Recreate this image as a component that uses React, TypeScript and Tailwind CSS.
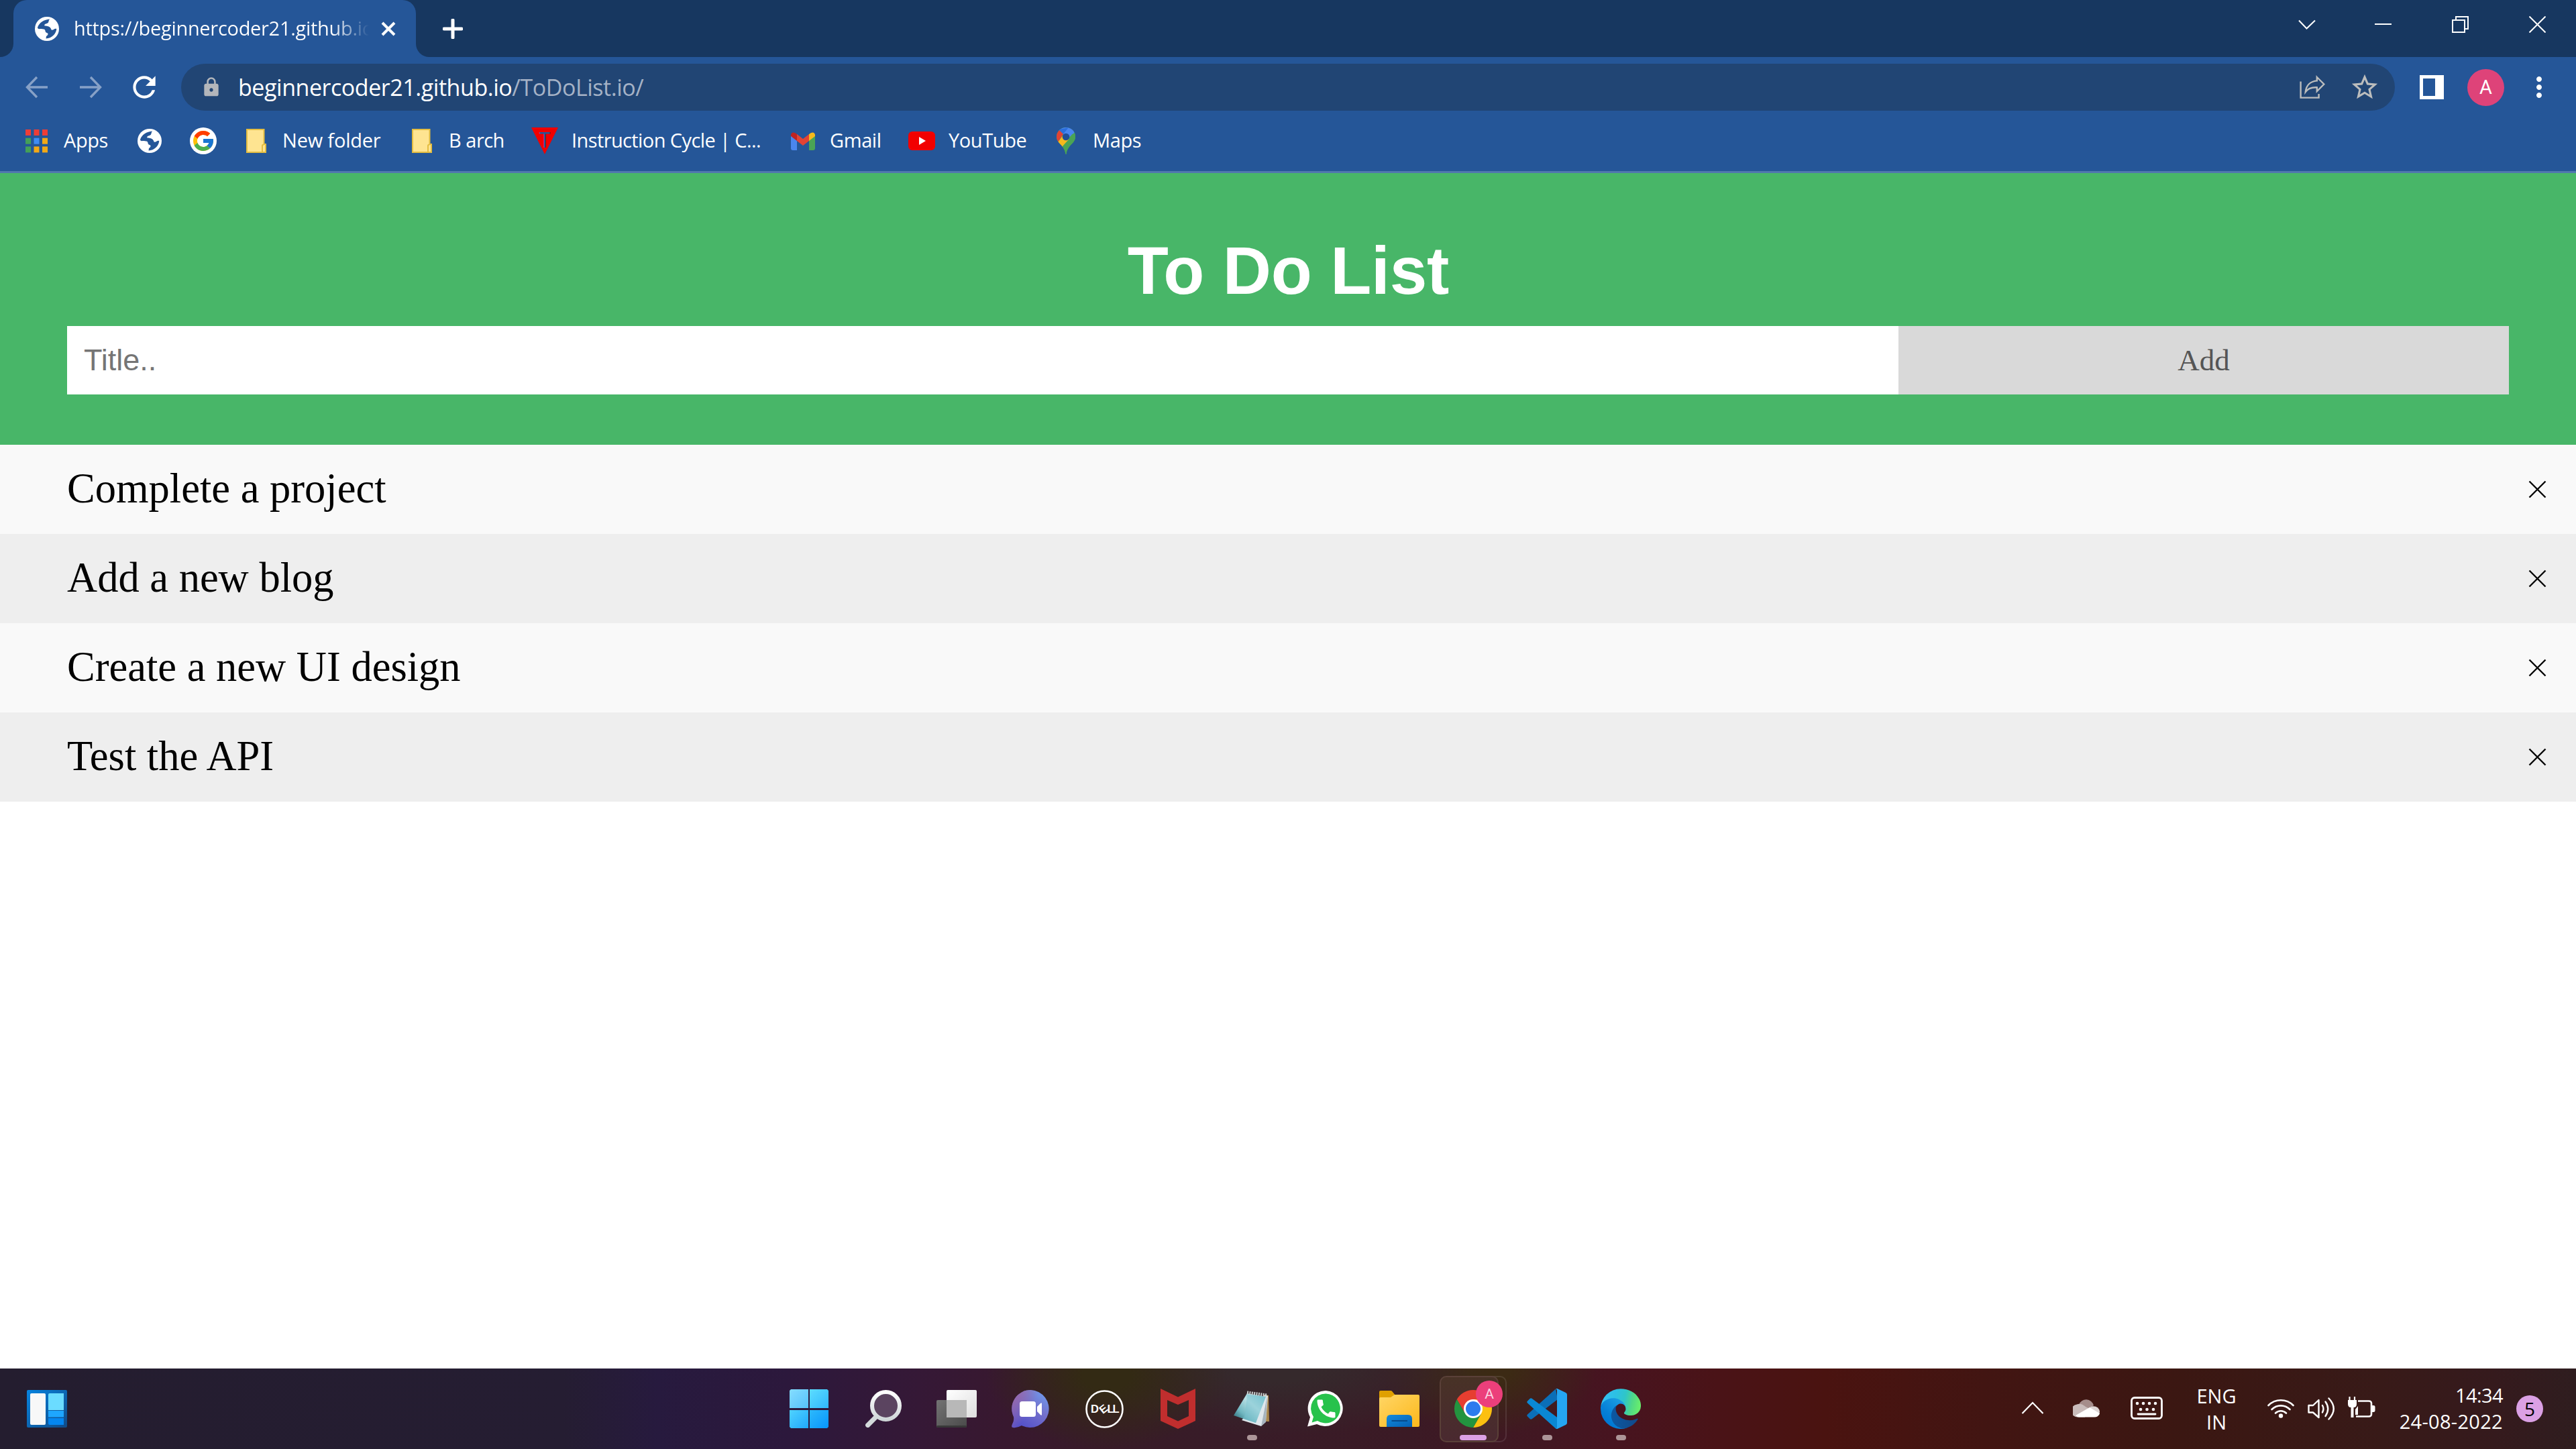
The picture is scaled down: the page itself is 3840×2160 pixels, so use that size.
import React from "react";
import { MdLock, MdStarBorder, MdRefresh, MdMoreVert, MdCall } from "react-icons/md";
import { FcGoogle } from "react-icons/fc";

const todos = ["Complete a project", "Add a new blog", "Create a new UI design", "Test the API"];

function Globe() {
  return (
    <svg className="h-9 w-9 shrink-0" viewBox="0 0 36 36">
      <circle cx="18" cy="18" r="18" fill="#fff" />
      <path
        d="M22 3.500 C14 4 6 9 4 16 C4 19 8 18 13 18.500 C17 19 14 23 18 24 C21 25 19 28 17 29 L16.500 32.500 C25 32 31.500 26 32.300 18 C29 16.500 28 20.500 24.500 19.500 C24 15.500 20 13.500 14.500 13.500 C13.500 10.500 17 10.500 19 9.500 C21 8.500 20 6 22 3.500 Z"
        fill="#255698"
      />
    </svg>
  );
}

function Tab() {
  return (
    <div className="flex h-[85px] w-full bg-[#173760]">
      <svg className="h-[85px] w-5 shrink-0" viewBox="0 0 20 85">
        <path d="M20 65 A20 20 0 0 1 0 85 H20 Z" fill="#255698" />
      </svg>
      <div className="flex h-[85px] w-[600px] shrink-0 items-center rounded-t-[20px] bg-[#255698] pl-8 text-white">
        <Globe />
        <div className="ml-[22px] h-[48px] w-[440px] whitespace-nowrap bg-[linear-gradient(90deg,#fff_385px,transparent_440px)] bg-clip-text text-[29px] leading-[46px] tracking-[-0.3px] text-transparent">
          https://beginnercoder21.github.io
        </div>
        <svg className="ml-[18px] h-[22px] w-[22px]" viewBox="0 0 22 22">
          <path d="M2 2 L20 20 M20 2 L2 20" stroke="#fff" strokeWidth="4" />
        </svg>
      </div>
      <svg className="h-[85px] w-5 shrink-0" viewBox="0 0 20 85">
        <path d="M0 65 A20 20 0 0 0 20 85 H0 Z" fill="#255698" />
      </svg>
      <svg className="ml-5 mt-7 h-[30px] w-[30px]" viewBox="0 0 30 30">
        <path d="M15 2 V28 M2 15 H28" stroke="#fff" strokeWidth="5" strokeLinecap="round" />
      </svg>
      <svg className="ml-auto mt-[29px] h-[15px] w-[26px]" viewBox="0 0 26 15">
        <path d="M1 1.5 L12.500 13.5 L25 1.5" fill="none" stroke="#fff" strokeWidth="2" />
      </svg>
      <div className="ml-[88px] mt-[35px] h-[2px] w-[25px] bg-white" />
      <svg className="ml-[90px] mt-6 h-[25px] w-[25px]" viewBox="0 0 25 25">
        <path d="M1 6 H19 V24 H1 Z M6 6 V1 H24 V19 H19" fill="none" stroke="#fff" strokeWidth="2" />
      </svg>
      <svg className="ml-[90px] mr-[45px] mt-6 h-[25px] w-[25px]" viewBox="0 0 25 25">
        <path d="M.5 .5 L24.5 24.5 M24.5 .5 L.5 24.5" stroke="#fff" strokeWidth="2" />
      </svg>
    </div>
  );
}

function Toolbar() {
  return (
    <div className="flex h-[90px] items-center bg-[#255698] pl-[38px] text-white">
      <svg className="h-[34px] w-[34px]" viewBox="0 0 34 34">
        <path d="M33 17 H3 M17 2 L2.5 17 L17 32" fill="none" stroke="#87a1c7" strokeWidth="3.4" />
      </svg>
      <svg className="ml-[46px] h-[34px] w-[34px]" viewBox="0 0 34 34">
        <path d="M1 17 H31 M17 2 L31.5 17 L17 32" fill="none" stroke="#87a1c7" strokeWidth="3.4" />
      </svg>
      <MdRefresh className="ml-[38px] h-[50px] w-[50px]" />
      <div className="ml-[30px] flex h-[70px] w-[3300px] items-center rounded-full bg-[#214574] pl-[29px] pr-[22px]">
        <MdLock className="h-8 w-8 text-[#b3b6bb]" />
        <span className="ml-[24px] whitespace-nowrap text-[34px] leading-[46px] tracking-[-0.45px]">
          beginnercoder21.github.io<span className="text-[#a5b2c6]">/ToDoList.io/</span>
        </span>
        <svg className="ml-auto h-[36px] w-[38px]" viewBox="0 0 38 36">
          <g fill="none" stroke="#bcbdbd" strokeWidth="2.4">
            <path d="M1.6 9.5 V33.6 H28.6 V28" />
            <path d="M25.8 3 L36.3 13.5 L25.8 24 V18.3 C18.5 17.8 12.5 20 8.8 25 C9.8 15.5 16 9.2 25.8 8.4 Z" />
          </g>
        </svg>
        <MdStarBorder className="ml-[36px] h-[46px] w-[46px] text-[#bcbdbd]" />
      </div>
      <svg className="ml-[37px] h-9 w-9" viewBox="0 0 36 36">
        <path d="M0 0 H36 V36 H0 Z M5 5 V31 H23 V5 Z" fill="#fff" fillRule="evenodd" />
      </svg>
      <div className="ml-[35px] flex h-[55px] w-[55px] items-center justify-center rounded-full bg-[#de4379] font-['Roboto'] text-[29px] leading-none">
        A
      </div>
      <MdMoreVert className="ml-[28px] h-12 w-12" />
    </div>
  );
}

function AppsIcon() {
  const c = ["#ee3d37", "#ee3d37", "#ee3d37", "#44a058", "#3f8cf4", "#f2a817", "#44a058", "#f2a817", "#f2a817"];
  return (
    <svg className="h-[35px] w-[35px] shrink-0" viewBox="0 0 35 35">
      {c.map((f, i) => (
        <rect key={i} x={1 + (i % 3) * 12.5} y={Math.floor(i / 3) * 12.7} width="8" height="9" fill={f} />
      ))}
    </svg>
  );
}

function BookmarkFolder() {
  return (
    <svg className="h-9 w-[30px] shrink-0" viewBox="0 0 30 36">
      <path d="M1 1 H26.500 V23 H29 V35 H1 Z" fill="#fee491" stroke="#e4bd41" strokeWidth="2" />
      <path d="M24 34 V25 Q24 23.500 26.500 23.500" fill="none" stroke="#e4bd41" strokeWidth="2" />
    </svg>
  );
}

function Bookmarks() {
  return (
    <div className="flex h-[83px] items-start border-b-[3px] border-[#5078ae] bg-[#255698] pl-[37px] text-[29px] text-white">
      <div className="flex h-[70px] items-center whitespace-nowrap leading-[44px]">
        <AppsIcon />
        <span className="ml-[23px] w-[110px] pb-[2px] tracking-[-0.4px]">Apps</span>
        <Globe />
        <div className="ml-[42px] flex h-10 w-10 items-center justify-center rounded-full bg-white">
          <FcGoogle className="h-9 w-9" />
        </div>
        <span className="ml-[44px]" />
        <BookmarkFolder />
        <span className="ml-[24px] w-[193px] pb-[2px] tracking-[-0.2px]">New folder</span>
        <BookmarkFolder />
        <span className="ml-[25px] w-[123px] pb-[2px] tracking-[-0.5px]">B arch</span>
        <svg className="h-10 w-10" viewBox="0 0 40 40">
          <path d="M0 0 H40 L20 40 Z" fill="#f00000" />
          <text x="0" y="0" transform="translate(20 30) scale(.85 1)" textAnchor="middle" fontFamily="Liberation Sans" fontSize="33" fill="#255698">T</text>
        </svg>
        <span className="ml-[20px] w-[327px] pb-[2px] tracking-[-0.6px]">Instruction Cycle | C...</span>
        <svg className="h-[27px] w-9" viewBox="0 0 36 27">
          <path d="M0 5 L9 11 V27 H3 Q0 27 0 24 Z" fill="#4a86ee" />
          <path d="M36 5 L27 11 V27 H33 Q36 27 36 24 Z" fill="#4aa455" />
          <path d="M9 3 L18 10 L27 3 V13 L18 20 L9 13 Z" fill="#e24334" />
          <path d="M0 4 Q1 -1 6 1 L9 3 V13 L0 6 Z" fill="#bf2322" />
          <path d="M36 4 Q35 -1 30 1 L27 3 V13 L36 6 Z" fill="#f6b91c" />
        </svg>
        <span className="ml-[22px] w-[117px] pb-[2px] tracking-[-0.4px]">Gmail</span>
        <svg className="h-7 w-10" viewBox="0 0 40 28">
          <rect width="40" height="28" rx="6" fill="#f20000" />
          <path d="M16 8 L26 14 L16 20 Z" fill="#fff" />
        </svg>
        <span className="ml-[20px] w-[161px] pb-[2px] tracking-[-0.4px]">YouTube</span>
        <svg className="h-10 w-7" viewBox="0 0 28 40">
          <clipPath id="pin"><path d="M14 0 A14 14 0 0 1 28 14 C28 24 16 26 14.5 40 H13.5 C12 26 0 24 0 14 A14 14 0 0 1 14 0 Z" /></clipPath>
          <g clipPath="url(#pin)">
            <rect width="28" height="40" fill="#4aa455" />
            <path d="M0 0 H28 V8 L14 14 L3 5 Z" fill="#4a86f0" />
            <path d="M3 3 L18 0 L9 11 Z" fill="#2c6fdc" />
            <path d="M0 3 L4 4 L10 10 L2 22 L0 18 Z" fill="#e24334" />
            <path d="M2 22 L10 11 L19 18 L8 30 Z" fill="#f6b91c" />
            <path d="M18 18 L28 6 V20 L14 40 L8 29 Z" fill="#4aa455" />
            <path d="M27 6 L18 16 L14 9 L21 1 Z" fill="#4a86f0" />
          </g>
          <circle cx="14" cy="14" r="5.3" fill="#214f96" />
        </svg>
        <span className="ml-[26px] pb-[2px] tracking-[-0.4px]">Maps</span>
      </div>
    </div>
  );
}

function TodoPage() {
  return (
    <div className="h-[1782px] bg-white">
      <div className="flex h-[405px] flex-col bg-[#48b668] px-[100px] pt-[88px] font-['Liberation_Sans',sans-serif]">
        <h1 className="pl-px text-center text-[100px] font-bold leading-[115px] tracking-[-0.2px] text-white">To Do List</h1>
        <div className="mt-[25px] flex h-[102px]">
          <div className="flex w-[2730px] items-center bg-white pb-px pl-[25px] text-[45px] leading-none text-[#757575]">Title..</div>
          <div className="flex w-[910px] items-center justify-center bg-[#d9d9d9] font-['Liberation_Serif',serif] text-[45px] leading-none text-[#555555]">
            Add
          </div>
        </div>
      </div>
      <ul className="font-['Liberation_Serif',serif] text-[62.5px] leading-[72px] text-black">
        {todos.map((t) => (
          <li key={t} className="flex h-[133px] items-center justify-between bg-[#f9f9f9] pl-[100px] pr-[44px] even:bg-[#eeeeee]">
            <span className="pb-[3px]">{t}</span>
            <svg className="h-[27px] w-[27px]" viewBox="0 0 27 27">
              <path d="M1.5 1.5 L25.5 25.5 M25.5 1.5 L1.5 25.5" stroke="#000" strokeWidth="2.4" />
            </svg>
          </li>
        ))}
      </ul>
    </div>
  );
}

function Slot({ children, dot }: { children: React.ReactNode; dot?: boolean }) {
  return (
    <div className="relative flex h-[120px] w-[110px] shrink-0 items-center justify-center">
      {children}
      {dot && <div className="absolute bottom-[13px] left-[48px] h-2 w-[15px] rounded-full bg-[#ac9598]" />}
    </div>
  );
}

function TaskIcons() {
  return (
    <div className="ml-[1051px] flex">
      <Slot>
        <svg className="h-[58px] w-[58px]" viewBox="0 0 58 58">
          <defs>
            <linearGradient id="w1" x1="0" y1="0" x2="1" y2="1"><stop stopColor="#85dcff" /><stop offset="1" stopColor="#55c2fb" /></linearGradient>
            <linearGradient id="w2" x1="0" y1="0" x2="1" y2="1"><stop stopColor="#5cdcff" /><stop offset="1" stopColor="#30b8fd" /></linearGradient>
            <linearGradient id="w3" x1="0" y1="0" x2="1" y2="1"><stop stopColor="#4fd2ff" /><stop offset="1" stopColor="#20a8fc" /></linearGradient>
            <linearGradient id="w4" x1="0" y1="0" x2="1" y2="1"><stop stopColor="#2db9fb" /><stop offset="1" stopColor="#0895fd" /></linearGradient>
          </defs>
          <path d="M2 0 H28 V28 H0 V2 Z" fill="url(#w1)" />
          <path d="M30 0 H56 L58 2 V28 H30 Z" fill="url(#w2)" />
          <path d="M0 31 H28 V58 H2 L0 56 Z" fill="url(#w3)" />
          <path d="M30 31 H58 V56 L56 58 H30 Z" fill="url(#w4)" />
        </svg>
      </Slot>
      <Slot>
        <svg className="ml-[2px] h-[56px] w-[54px]" viewBox="0 0 54 56">
          <defs><linearGradient id="mag" x1="0" y1="0" x2="0" y2="1"><stop stopColor="#fff" /><stop offset="1" stopColor="#cfd6d8" /></linearGradient></defs>
          <path d="M15 41 L3.6 52.5" stroke="#d3d9db" strokeWidth="7" strokeLinecap="round" />
          <circle cx="30.5" cy="23.5" r="20.5" fill="#5b4460" stroke="url(#mag)" strokeWidth="6" />
        </svg>
      </Slot>
      <Slot>
        <svg className="h-[56px] w-[60px]" viewBox="0 0 60 56">
          <defs>
            <linearGradient id="tv1" x1="0" y1="0" x2="1" y2="1"><stop stopColor="#fff" /><stop offset="1" stopColor="#dedede" /></linearGradient>
            <linearGradient id="tv2" x1="0" y1="0" x2="1" y2="1"><stop stopColor="#737373" /><stop offset="1" stopColor="#4a4a4a" /></linearGradient>
          </defs>
          <rect x="15" y="0" width="45" height="41" rx="2" fill="url(#tv1)" />
          <rect x="0" y="15" width="45" height="41" rx="2" fill="url(#tv2)" />
          <rect x="15" y="15" width="30" height="26" fill="#b8b8b8" />
          <rect x="0" y="53" width="45" height="3" rx="1.5" fill="#383838" />
        </svg>
      </Slot>
      <Slot>
        <svg className="h-[57px] w-[57px]" viewBox="0 0 57 57">
          <defs><linearGradient id="ch" x1="1" y1="0" x2=".3" y2="1"><stop stopColor="#6ea4f5" /><stop offset=".5" stopColor="#7470cc" /><stop offset="1" stopColor="#5350c8" /></linearGradient>
          <linearGradient id="ch2" x1="0" y1=".2" x2=".5" y2=".5"><stop stopColor="#9967a8" /><stop offset="1" stopColor="#9967a8" stopOpacity="0" /></linearGradient></defs>
          <path d="M28.5 0 A28 28 0 1 1 15 53 Q8 57 2 56 Q-1 56 1 51 Q4 46 3 40 A28 28 0 0 1 28.5 0 Z" fill="url(#ch)" />
          <path d="M28.5 0 A28 28 0 1 1 15 53 Q8 57 2 56 Q-1 56 1 51 Q4 46 3 40 A28 28 0 0 1 28.5 0 Z" fill="url(#ch2)" />
          <rect x="12" y="17" width="24" height="23" rx="3.5" fill="#fff" />
          <path d="M38 25 L43 20 Q45 18 45 21 V36 Q45 39 43 37 L38 32 Z" fill="#fff" />
        </svg>
      </Slot>
      <Slot>
        <svg className="h-[57px] w-[57px]" viewBox="0 0 57 57">
          <circle cx="28.5" cy="28.5" r="27" fill="none" stroke="#fff" strokeWidth="2.6" />
          <g fill="#fff" fontFamily="Liberation Sans" fontWeight="700" fontSize="16.500">
            <text x="8" y="34">D</text>
            <text x="0" y="5.500" textAnchor="middle" transform="translate(27 28.500) rotate(-38)">E</text>
            <text x="32.500" y="34">L</text>
            <text x="40.500" y="34">L</text>
          </g>
        </svg>
      </Slot>
      <Slot>
        <svg className="h-[60px] w-[52px]" viewBox="0 0 52 60">
          <path d="M0 0 L26 12.5 L52 0 V48 L26 60 L0 48 Z M10 17 V41 L26 48.5 L42 41 V17 L26 24 Z" fill="#c02e2e" fillRule="evenodd" />
        </svg>
      </Slot>
      <Slot dot>
        <svg className="h-[54px] w-[56px]" viewBox="0 0 56 54">
          <defs>
            <linearGradient id="np" x1="0" y1="1" x2="1" y2="0"><stop stopColor="#17535f" /><stop offset=".3" stopColor="#6fb6c0" /><stop offset=".6" stopColor="#b8dfe4" /><stop offset="1" stopColor="#6cc0cd" /></linearGradient>
          </defs>
          <path d="M46 6 L53 7 L54 46 L46 46 Z" fill="#a9874d" />
          <path d="M48 6 L52 8 L49 46 L42 53 L13 44 Z" fill="#dfe7ec" />
          <path d="M51 8 L49 47 L42 53 Z" fill="#a6b3bd" />
          <path d="M21 4 L49 9 L34 48 L1 37 Z" fill="url(#np)" />
          <path d="M21 6 L18 36 L14 42 L34 48 L49 9 Z" fill="#79c4d0" opacity=".45" />
          <path d="M21 3 L51 7" stroke="#c9cfcf" strokeWidth="5" strokeDasharray="2 1.4" />
        </svg>
      </Slot>
      <Slot>
        <div className="relative h-[54px] w-[54px]">
          <svg className="h-[54px] w-[54px]" viewBox="0 0 54 54">
            <path d="M27.5 0 A26.5 26.5 0 1 1 14 50 L0 53.5 L4 39.5 A26.5 26.5 0 0 1 27.5 0 Z" fill="#fff" />
            <path d="M27.5 4.5 A22 22 0 1 1 15 45 L6.5 47.5 L9 39 A22 22 0 0 1 27.5 4.5 Z" fill="#27c24c" />
          </svg>
          <MdCall className="absolute left-[10px] top-[9px] h-[36px] w-[36px] text-white" />
        </div>
      </Slot>
      <Slot>
        <svg className="h-[54px] w-[60px]" viewBox="0 0 60 54">
          <defs>
            <linearGradient id="fo" x1="0" y1="0" x2="1" y2="1"><stop stopColor="#ffd666" /><stop offset="1" stopColor="#fcb81c" /></linearGradient>
            <linearGradient id="fb" x1="0" y1="0" x2="1" y2="1"><stop stopColor="#128bdc" /><stop offset="1" stopColor="#0560b5" /></linearGradient>
          </defs>
          <path d="M0 2 Q0 0 2 0 H17 Q19 0 20 2 L24 7 V14 H0 Z" fill="#e0a000" />
          <path d="M0 12 Q0 10 2 10 H17 L23 6 H58 Q60 6 60 8 V52 Q60 54 58 54 H2 Q0 54 0 52 Z" fill="url(#fo)" />
          <path d="M11 54 V42 Q11 36 17 36 H43 Q49 36 49 42 V54 Z" fill="url(#fb)" />
          <path d="M18.500 45 H42" stroke="#064a8c" strokeWidth="2" />
        </svg>
      </Slot>
      <div className="relative flex h-[120px] w-[110px] shrink-0 items-center justify-center">
        <div className="absolute left-[12px] top-[11px] h-[99px] w-[93px] rounded-[10px] border-2 border-white/10" />
        <div className="absolute left-[5px] top-[11px] h-[99px] w-[88px] rounded-[10px] border-2 border-[#5a4038] bg-gradient-to-b from-[#483226] to-[#4a2930]" />
        <svg className="relative h-14 w-14" viewBox="0 0 56 56">
          <path d="M3.750 14 A28 28 0 0 1 52.25 14 H28 L15.880 35 Z" fill="#e63e30" />
          <path d="M52.25 14 A28 28 0 0 1 28 56 L40.12 35 L28 14 Z" fill="#fcc010" />
          <path d="M28 56 A28 28 0 0 1 3.750 14 L15.880 35 L40.12 35 Z" fill="#23943f" />
          <circle cx="28" cy="28" r="14" fill="#fff" />
          <circle cx="28" cy="28" r="11" fill="#2c7bee" />
        </svg>
        <div className="absolute left-[59px] top-[18px] flex h-10 w-10 items-center justify-center rounded-full bg-[#ec3f7b] font-['Roboto'] text-[21px] leading-none text-[#fbd5e3]">
          A
        </div>
        <div className="absolute bottom-[13px] left-[35px] h-2 w-10 rounded-full bg-[#dba0e4]" />
      </div>
      <Slot dot>
        <svg className="h-[60px] w-[60px]" viewBox="0 0 60 60">
          <path d="M43 .5 L1 38.500 Q-.5 40 1 41.500 L4.500 45 Q6 46.300 8 45 L46 16 Z" fill="#0b6fb8" />
          <path d="M8 15 Q6 13.700 4.500 15 L1 18.500 Q-.5 20 1 21.500 L43 59.500 L46 60 V43.500 Z" fill="#0a88d4" />
          <path d="M43 .5 Q44.500 -.5 46 .2 L58 6 Q60 7 60 9 V51 Q60 53 58 54 L46 59.800 Q44 60.500 43 59.500 Q45 60 45 57 V3 Q45 0 43 .5 Z" fill="#25a6f2" />
        </svg>
      </Slot>
      <Slot dot>
        <svg className="h-[60px] w-[60px]" viewBox="0 0 256 256">
          <defs>
            <linearGradient id="e1" x1="58" y1="177" x2="231" y2="177" gradientUnits="userSpaceOnUse"><stop stopColor="#0c59a4" /><stop offset="1" stopColor="#114a8b" /></linearGradient>
            <linearGradient id="e2" x1="157" y1="100" x2="46" y2="220" gradientUnits="userSpaceOnUse"><stop stopColor="#1b9de2" /><stop offset=".2" stopColor="#1595df" /><stop offset=".7" stopColor="#0680d7" /><stop offset="1" stopColor="#0078d4" /></linearGradient>
            <linearGradient id="e3" x1="10" y1="60" x2="250" y2="110" gradientUnits="userSpaceOnUse"><stop stopColor="#35c1f1" /><stop offset=".35" stopColor="#2cc0e4" /><stop offset=".6" stopColor="#2fc6c8" /><stop offset=".8" stopColor="#4fd888" /><stop offset="1" stopColor="#66eb6e" /></linearGradient>
          </defs>
          <g transform="translate(-4.600 -5)">
            <path d="M235.700 195.500a93.700 93.700 0 0 1-10.600 4.700 101.900 101.900 0 0 1-35.900 6.400c-47.300 0-88.500-32.500-88.500-74.300a31.500 31.500 0 0 1 16.400-27.300c-42.800 1.800-53.800 46.400-53.800 72.500 0 73.900 68.100 81.400 82.800 81.400 7.900 0 19.800-2.300 27-4.600l1.300-.4a128.300 128.300 0 0 0 66.600-52.800 4 4 0 0 0-5.300-5.600z" fill="url(#e1)" />
            <path d="M110.300 246.300A79.200 79.200 0 0 1 87.600 225a80.700 80.700 0 0 1 29.500-120c3.200-1.500 8.500-4.100 15.600-4a32.400 32.400 0 0 1 25.700 13 31.900 31.900 0 0 1 6.300 18.700c0-.2 24.500-79.600-80-79.600-43.900 0-80 41.600-80 78.200a130.200 130.200 0 0 0 12.100 56 128 128 0 0 0 156.400 67 75.500 75.500 0 0 1-62.800-8z" fill="url(#e2)" />
            <path d="M156.900 153.800c-.8 1-3.400 2.500-3.400 5.700 0 2.600 1.700 5.200 4.800 7.300 14.400 10.100 41.700 8.700 41.700 8.700a59.800 59.800 0 0 0 30.300-8.300 61.400 61.400 0 0 0 30.400-52.900c.3-22.400-8-37.300-11.300-43.900C228 28.800 182.700 6 132.400 6a128 128 0 0 0-128 126.200c.5-36.500 36.800-66 80-66 3.500 0 23.500.3 42 10a72.600 72.600 0 0 1 30.900 29.300c6.100 10.600 7.200 24.100 7.200 29.500s-2.700 13.300-7.600 18.800z" fill="url(#e3)" />
          </g>
        </svg>
      </Slot>
    </div>
  );
}

function Tray() {
  return (
    <div className="ml-auto flex h-full items-center pr-[49px] text-[29px] text-white">
      <svg className="mb-[4px] h-[19px] w-[34px]" viewBox="0 0 34 19">
        <path d="M1.500 18 L17 2 L32.500 18" fill="none" stroke="#fff" strokeWidth="2.2" />
      </svg>
      <svg className="ml-[43px] mb-[2px] h-[27px] w-[40px]" viewBox="0 0 40 27">
        <path d="M9 8 A11.500 11.500 0 0 1 31 9 L20 17 Z" fill="#a58d8b" />
        <path d="M18 26.500 H8 A9 9 0 0 1 6 7.500 Q12 5 19 11 L25 14 Z" fill="#c9bcbb" />
        <path d="M20 15 L28 10.500 Q38 9 40 18 Q40 22 38 24 L22 20 Z" fill="#ded6d5" />
        <path d="M4 24 L25 12 L40 21 Q38 26.500 32 26.500 H9 Q6 26.500 4 24 Z" fill="#fff" />
      </svg>
      <svg className="ml-[46px] mb-[3px] h-[34px] w-[48px]" viewBox="0 0 48 34">
        <rect x="1.500" y="1.500" width="45" height="31" rx="4.500" fill="none" stroke="#fff" strokeWidth="2.800" />
        <path d="M11 26 H37" stroke="#fff" strokeWidth="2.800" strokeLinecap="round" />
        {[10, 19, 28, 37].map((x) => <circle key={x} cx={x} cy="10" r="2.300" fill="#fff" />)}
        {[15, 24.5, 34].map((x) => <circle key={x} cx={x} cy="19" r="2.300" fill="#fff" />)}
      </svg>
      <div className="ml-[40px] flex w-[80px] flex-col items-center leading-[39px]">
        <span>ENG</span>
        <span>IN</span>
      </div>
      <svg className="ml-[36px] mb-[2px] h-[29px] w-[40px]" viewBox="0 0 40 29">
        <g fill="none" stroke="#fff" strokeWidth="2.600" strokeLinecap="round">
          <path d="M1.500 10 A26 26 0 0 1 38.500 10" />
          <path d="M6.500 16 A19 19 0 0 1 33.500 16" />
          <path d="M12 21.500 A11.500 11.500 0 0 1 28 21.500" />
        </g>
        <circle cx="20" cy="25.500" r="3.200" fill="#fff" />
      </svg>
      <svg className="ml-[20px] h-[34px] w-[41px]" viewBox="0 0 41 34">
        <g fill="none" stroke="#fff" strokeWidth="2.400" strokeLinecap="round" strokeLinejoin="round">
          <path d="M1.500 12 H8 L16.500 4 V30 L8 22.500 H1.500 Z" />
          <path d="M22 12 Q25 17 22 22.500" />
          <path d="M26.500 6.500 Q34 17 26.500 28" />
          <path d="M31.500 1.500 Q46 17 31.500 32.500" />
        </g>
      </svg>
      <svg className="ml-[19px] mb-[4px] h-[32px] w-[41px]" viewBox="0 0 41 32">
        <path d="M2.500 0 V6 M10 0 V6" stroke="#fff" strokeWidth="2.200" />
        <path d="M0 5 H13 V11 Q13 16 8.500 16 V31 H4.500 V16 Q0 16 0 11 Z" fill="#fff" />
        <path d="M15 6.500 H31 Q35 6.500 35 10 V26 Q35 29.500 31 29.500 H12" fill="none" stroke="#fff" strokeWidth="2.600" />
        <path d="M36 13 H38 Q40.500 13 40.500 15 V21 Q40.500 23 38 23 H36 Z" fill="#fff" />
        <path d="M15 14 V27 H11 V19 Z" fill="#fff" />
      </svg>
      <div className="ml-[20px] flex w-[170px] flex-col items-end pb-[3px] leading-[39px]">
        <span className="tracking-[-0.6px]">14:34</span>
        <span className="tracking-[0.3px]">24-08-2022</span>
      </div>
      <div className="ml-[20px] flex h-10 w-10 items-center justify-center rounded-full bg-[#dba0e4] text-[28px] leading-none text-black">5</div>
    </div>
  );
}

function Taskbar() {
  return (
    <div className="flex h-[120px] w-full items-center bg-[radial-gradient(ellipse_180px_110px_at_1650px_10px,#332a14_20%,transparent),radial-gradient(ellipse_320px_100px_at_1900px_0px,#35292c_20%,transparent),radial-gradient(ellipse_160px_100px_at_2220px_0px,#3c2a14_20%,transparent),linear-gradient(90deg,#241d2f_0px,#251d32_840px,#271a3e_980px,#2c183c_1175px,#351836_1370px,#38182f_1500px,#381b28_1650px,#381c28_1850px,#3b1a25_2100px,#421722_2300px,#471420_2400px,#4a1317_2560px,#4a1310_2720px,#421512_2960px,#3b1712_3250px,#381a18_3550px,#351a1d_3720px,#2f1d1f_3840px)]">
      <svg className="ml-10 h-[56px] w-[60px] shrink-0" viewBox="0 0 60 56">
        <defs><linearGradient id="wg" x1="0" y1="0" x2="1" y2="1"><stop stopColor="#0784e0" /><stop offset="1" stopColor="#114a86" /></linearGradient></defs>
        <rect width="60" height="56" rx="2" fill="url(#wg)" />
        <rect x="5" y="5" width="23" height="47" rx="2" fill="#f8f8f8" />
        <path d="M32 7 Q32 5 34 5 H55 V30 H32 Z" fill="#6bdcff" />
        <rect x="32" y="31" width="23" height="9.500" fill="#1ea6ff" />
        <path d="M32 42 H55 V52 H34 Q32 52 32 50 Z" fill="#0486f0" />
      </svg>
      <TaskIcons />
      <Tray />
    </div>
  );
}

export default function App() {
  return (
    <div className="flex h-[2160px] w-[3840px] flex-col overflow-hidden bg-white font-['Open_Sans','Noto_Sans',sans-serif]">
      <Tab />
      <Toolbar />
      <Bookmarks />
      <TodoPage />
      <Taskbar />
    </div>
  );
}
